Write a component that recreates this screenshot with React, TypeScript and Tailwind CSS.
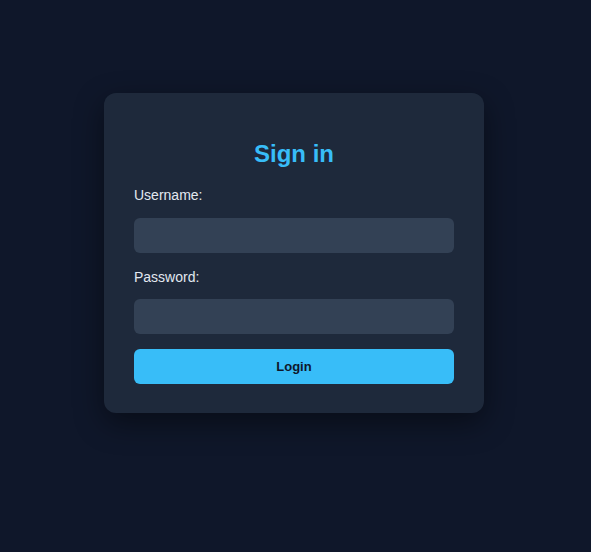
import React, { useState } from 'react';

const App: React.FC = () => {
  const [username, setUsername] = useState('');
  const [password, setPassword] = useState('');

  const handleSubmit = (e: React.FormEvent) => {
    e.preventDefault();
  };

  return (
    <div className="min-h-screen w-full bg-[#0f172a] flex justify-center pr-[3px] pt-[93px] font-['Liberation_Sans',Arial,sans-serif]">
      <form
        onSubmit={handleSubmit}
        className="w-[380px] h-fit bg-[#1e293b] rounded-xl px-[30px] pt-[30px] pb-[29px] flex flex-col shadow-[0_10px_30px_rgba(0,0,0,0.45)]"
      >
        <h2 className="mt-[15px] text-2xl leading-8 font-bold text-center text-[#38bdf8]">Sign in</h2>

        <label htmlFor="username" className="mt-[15px] text-sm leading-5 text-[#e2e8f0]">Username:</label>
        <input
          id="username"
          type="text"
          value={username}
          onChange={(e) => setUsername(e.target.value)}
          className="mt-[13px] h-[35px] w-full rounded-md bg-[#334155] px-3 text-sm text-[#e2e8f0] outline-none"
        />

        <label htmlFor="password" className="mt-[14px] text-sm leading-5 text-[#e2e8f0]">Password:</label>
        <input
          id="password"
          type="password"
          value={password}
          onChange={(e) => setPassword(e.target.value)}
          className="mt-3 h-[35px] w-full rounded-md bg-[#334155] px-3 text-sm text-[#e2e8f0] outline-none"
        />

        <button
          type="submit"
          className="mt-[15px] h-[35px] w-full rounded-md bg-[#38bdf8] text-[13px] font-bold text-[#0f172a] cursor-pointer"
        >
          Login
        </button>
      </form>
    </div>
  );
};

export default App;
